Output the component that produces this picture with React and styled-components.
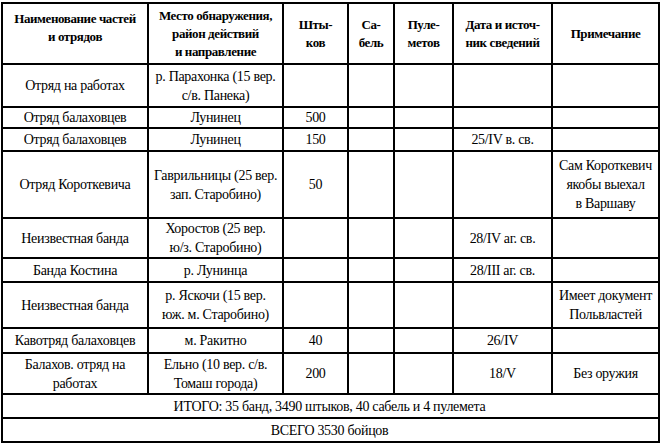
import React from "react";
import styled, { createGlobalStyle } from "styled-components";

const GlobalStyle = createGlobalStyle`
  html, body {
    margin: 0;
    padding: 0;
    background: #fff;
    font-family: "Liberation Serif", "Times New Roman", "DejaVu Serif", serif;
  }
`;

const serif = `"Liberation Serif", "Times New Roman", "DejaVu Serif", serif`;

const Page = styled.div`
  width: 661px;
  height: 444px;
  padding: 2px 2px 0 1px;
  box-sizing: border-box;
  background: #fff;
  overflow: hidden;
  font-family: ${serif};
`;

const Table = styled.table`
  width: 657px;
  border-collapse: collapse;
  table-layout: fixed;
  color: #000;
`;

const Row = styled.tr`
  height: ${p => p.$h}px;
`;

const Cell = styled.td`
  border: 2px solid #000;
  padding: 0 2px;
  text-align: center;
  vertical-align: middle;
  white-space: nowrap;
  overflow: hidden;

  font-family: ${serif};
  font-size: 14px;
  line-height: 19px;
  letter-spacing: -0.3px;
`;

const HeadCell = styled.th`
  border: 2px solid #000;
  padding: 0 2px ${p => p.$lift || 0}px;
  text-align: center;
  vertical-align: middle;
  white-space: nowrap;
  overflow: hidden;

  font-family: ${serif};
  font-weight: 700;
  font-size: 13px;
  line-height: 18px;
  letter-spacing: -0.4px;
`;

const TotalCell = styled(Cell)`
  padding-left: 0;
`;

const widths = [146, 135, 65, 46, 59, 99, 107];

const rows = [
  { h: 43, c: ["Отряд на работах", ["р. Парахонка (15 вер.", "с/в. Панека)"], "", "", "", "", ""] },
  { h: 21, c: ["Отряд балаховцев", "Лунинец", "500", "", "", "", ""] },
  { h: 23, c: ["Отряд балаховцев", "Лунинец", "150", "", "", "25/IV в. св.", ""] },
  {
    h: 67,
    c: [
      "Отряд Короткевича",
      ["Гаврильницы (25 вер.", "зап. Старобино)"],
      "50",
      "",
      "",
      "",
      ["Сам Короткевич", "якобы выехал", "в Варшаву"]
    ]
  },
  { h: 39, c: ["Неизвестная банда", ["Хоростов (25 вер.", "ю/з. Старобино)"], "", "", "", "28/IV аг. св.", ""] },
  { h: 24, c: ["Банда Костина", "р. Лунинца", "", "", "", "28/III аг. св.", ""] },
  {
    h: 46,
    c: [
      "Неизвестная банда",
      ["р. Яскочи (15 вер.", "юж. м. Старобино)"],
      "",
      "",
      "",
      "",
      ["Имеет документ", "Польвластей"]
    ]
  },
  { h: 25, c: ["Кавотряд балаховцев", "м. Ракитно", "40", "", "", "26/IV", ""] },
  {
    h: 41,
    c: [
      ["Балахов. отряд на", "работах"],
      ["Ельно (10 вер. с/в.", "Томаш города)"],
      "200",
      "",
      "",
      "18/V",
      "Без оружия"
    ]
  }
];

const Lines = ({ value }) => {
  if (!Array.isArray(value)) {
    return value;
  }
  return value.map((line, i) => (
    <React.Fragment key={i}>
      {i > 0 && <br />}
      {line}
    </React.Fragment>
  ));
};

export default function App() {
  return (
    <Page>
      <GlobalStyle />
      <Table>
        <colgroup>
          {widths.map((w, i) => (
            <col key={i} style={{ width: w }} />
          ))}
        </colgroup>
        <thead>
          <Row $h={61}>
            <HeadCell $lift={12}>
              Наименование частей
              <br />
              и отрядов
            </HeadCell>
            <HeadCell>
              Место обнаружения,
              <br />
              район действий
              <br />
              и направление
            </HeadCell>
            <HeadCell>
              Шты-
              <br />
              ков
            </HeadCell>
            <HeadCell>
              Са-
              <br />
              бель
            </HeadCell>
            <HeadCell>
              Пуле-
              <br />
              метов
            </HeadCell>
            <HeadCell>
              Дата и источ-
              <br />
              ник сведений
            </HeadCell>
            <HeadCell>Примечание</HeadCell>
          </Row>
        </thead>
        <tbody>
          {rows.map((row, i) => (
            <Row key={i} $h={row.h}>
              {row.c.map((v, j) => (
                <Cell key={j}>
                  <Lines value={v} />
                </Cell>
              ))}
            </Row>
          ))}
          <Row $h={24}>
            <TotalCell colSpan={7}>
              ИТОГО: 35 банд, 3490 штыков, 40 сабель и 4 пулемета
            </TotalCell>
          </Row>
          <Row $h={24}>
            <TotalCell colSpan={7}>ВСЕГО 3530 бойцов</TotalCell>
          </Row>
        </tbody>
      </Table>
    </Page>
  );
}
